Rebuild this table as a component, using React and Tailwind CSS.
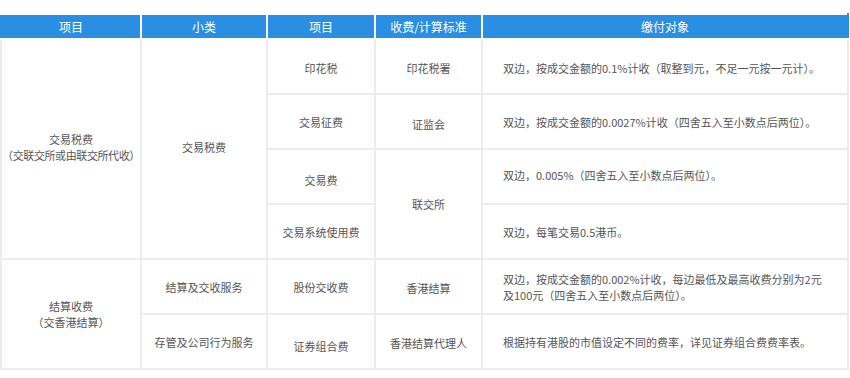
import React from "react";

const td = "border-2 border-[#ececec] text-center align-middle whitespace-nowrap";
const desc = "border-2 border-[#ececec] text-left align-middle pl-[20px] pr-[10px] whitespace-nowrap";

export default function App() {
  return (
    <div className="w-[850px] h-[378px] bg-white pt-[13px] overflow-hidden" style={{ fontFamily: '"Noto Sans CJK SC", "Noto Sans", sans-serif' }}>
      <table className="border-collapse table-fixed w-[849px] text-[11px] leading-[16px] text-[#555]">
        <colgroup>
          <col className="w-[140px]" />
          <col className="w-[126px]" />
          <col className="w-[108px]" />
          <col className="w-[107px]" />
          <col />
        </colgroup>
        <thead>
          <tr className="h-[25px] bg-[#2a8fe2] text-white text-[12px]">
            <th className="font-normal border-2 border-white border-l-[#2a8fe2]">项目</th>
            <th className="font-normal border-2 border-white">小类</th>
            <th className="font-normal border-2 border-white">项目</th>
            <th className="font-normal border-2 border-white">收费/计算标准</th>
            <th className="font-normal border-2 border-white border-r-[#2a8fe2]">缴付对象</th>
          </tr>
        </thead>
        <tbody>
          <tr className="h-[55px]">
            <td rowSpan={4} className={td}>
              <div className="pb-[4px]">
                交易税费
                <br />
                <span className="tracking-[-0.4px]">（交联交所或由联交所代收）</span>
              </div>
            </td>
            <td rowSpan={4} className={td}><div className="pb-[4px]">交易税费</div></td>
            <td className={td}><div className="pt-[2px]">印花税</div></td>
            <td className={td}><div className="pt-[2px]">印花税署</div></td>
            <td className={desc}><div className="pt-[2px]">双边，按成交金额的0.1%计收（取整到元，不足一元按一元计）。</div></td>
          </tr>
          <tr className="h-[55px]">
            <td className={td}>交易征费</td>
            <td className={td}><div className="pt-[4px]">证监会</div></td>
            <td className={desc}>双边，按成交金额的0.0027%计收（四舍五入至小数点后两位）。</td>
          </tr>
          <tr className="h-[55px]">
            <td className={td}><div className="pt-[6px]">交易费</div></td>
            <td rowSpan={2} className={td}>联交所</td>
            <td className={desc}><div className="pb-[4px]">双边，0.005%（四舍五入至小数点后两位）。</div></td>
          </tr>
          <tr className="h-[55px]">
            <td className={td}>交易系统使用费</td>
            <td className={desc}>双边，每笔交易0.5港币。</td>
          </tr>
          <tr className="h-[55px]">
            <td rowSpan={2} className={td}>
              结算收费
              <br />
              （交香港结算）
            </td>
            <td className={td}>结算及交收服务</td>
            <td className={td}>股份交收费</td>
            <td className={td}><div className="pt-[2px]">香港结算</div></td>
            <td className={desc}>
              双边，按成交金额的0.002%计收，每边最低及最高收费分别为2元
              <br />
              及100元（四舍五入至小数点后两位）。
            </td>
          </tr>
          <tr className="h-[55px]">
            <td className={td}>存管及公司行为服务</td>
            <td className={td}><div className="pt-[8px]">证券组合费</div></td>
            <td className={td}><div className="pt-[2px]">香港结算代理人</div></td>
            <td className={desc}>根据持有港股的市值设定不同的费率，详见证券组合费费率表。</td>
          </tr>
        </tbody>
      </table>
    </div>
  );
}
